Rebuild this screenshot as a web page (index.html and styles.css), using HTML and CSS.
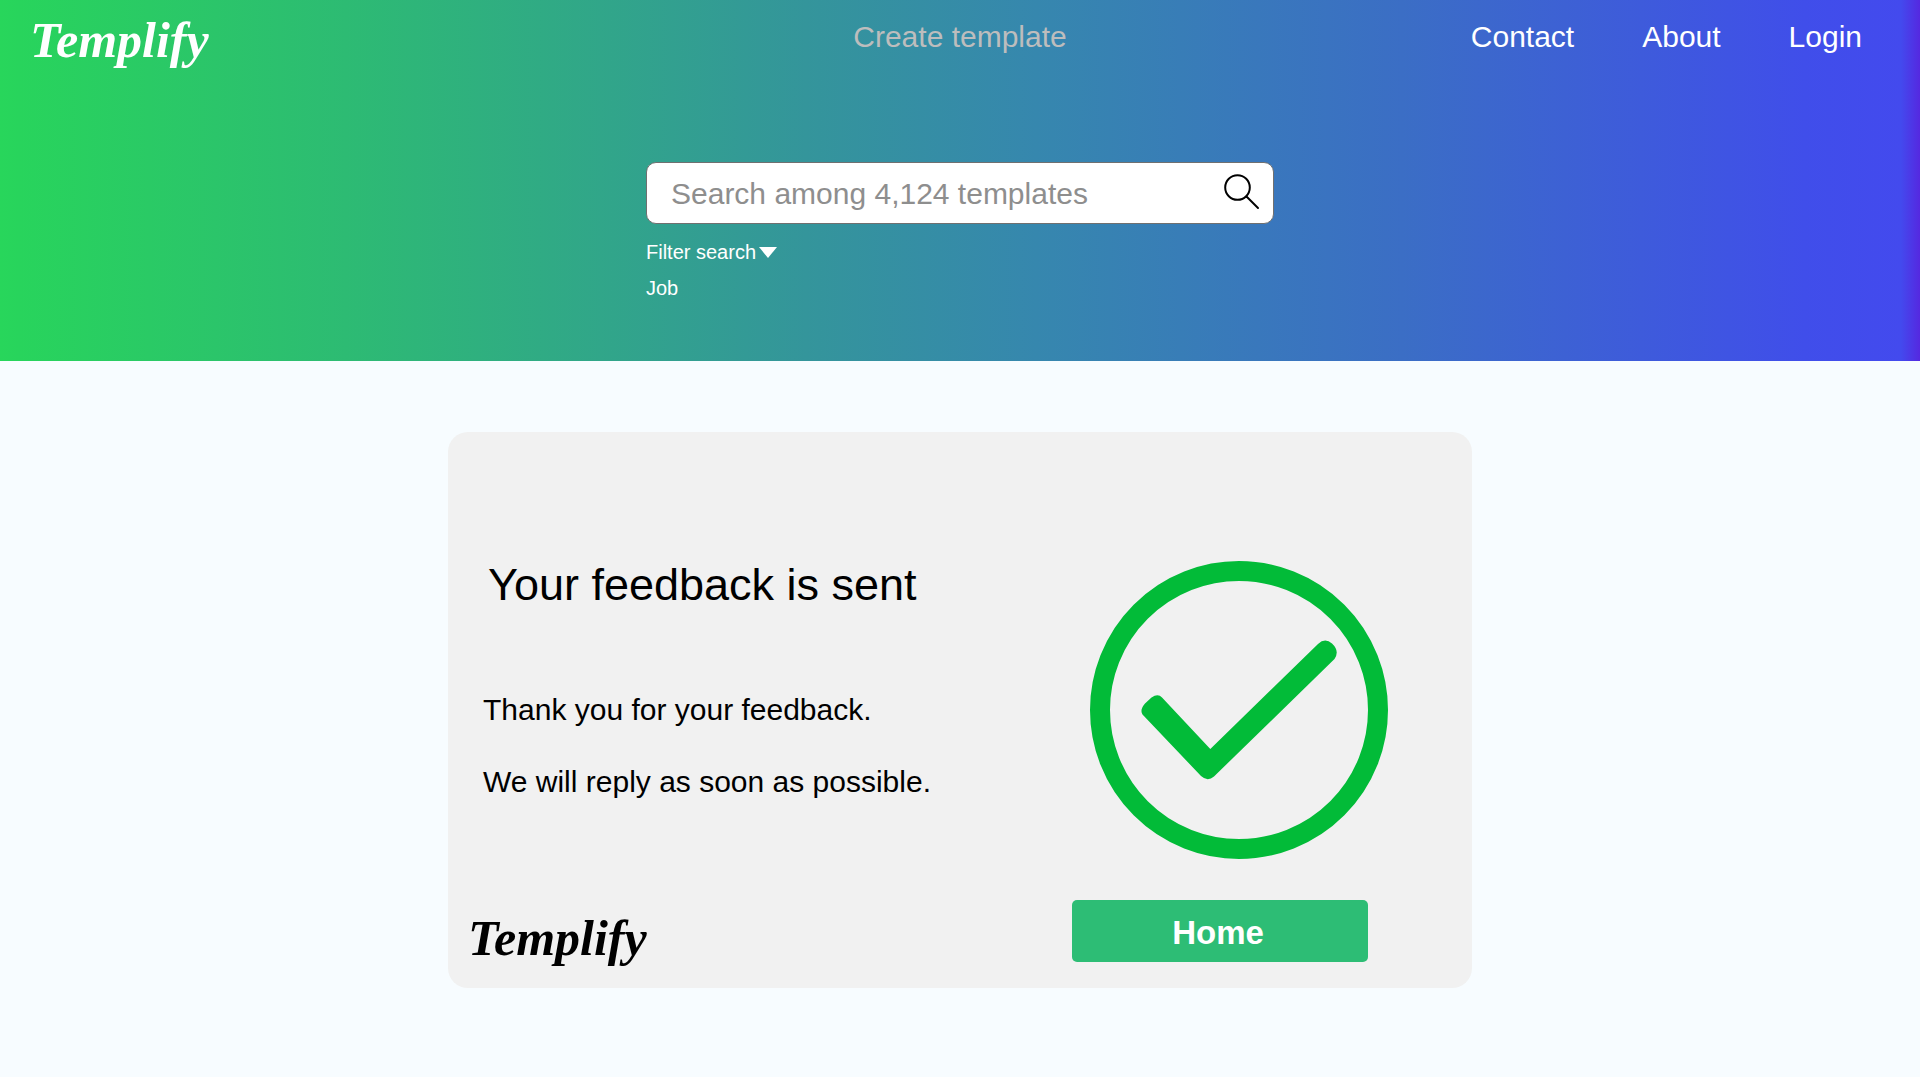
FILE: index.html
```html
<!DOCTYPE html>
<html lang="en">
<head>
  <meta charset="utf-8">
  <meta name="viewport" content="width=device-width, initial-scale=1">
  <title>Templify</title>
  <link rel="stylesheet" href="styles.css">
</head>
<body>
  <header class="hero">
    <nav class="nav">
      <a class="logo" href="#">Templify</a>
      <a class="nav-create" href="#">Create template</a>
      <div class="nav-links">
        <a href="#">Contact</a>
        <a href="#">About</a>
        <a href="#">Login</a>
      </div>
    </nav>
    <form class="search">
      <div class="search-box">
        <input class="search-input" type="text" aria-label="Search templates" placeholder="Search among 4,124 templates">
        <button class="search-button" type="button" aria-label="Search">
          <svg width="36" height="38" viewBox="0 0 36 38" fill="none" stroke="#000" stroke-width="2" stroke-linecap="round"><circle cx="13.5" cy="13.5" r="12.3"/><path d="M22.5 22.5 34 34"/></svg>
        </button>
      </div>
      <button class="filter" type="button">Filter search
        <svg width="18" height="11" viewBox="0 0 18 11" fill="#fff"><path d="M0 0H18L9 11Z"/></svg>
      </button>
      <button class="filter" type="button">Job</button>
    </form>
  </header>
  <main class="content">
    <section class="card">
      <div class="message">
        <h1 class="title">Your feedback is sent</h1>
        <p class="text">Thank you for your feedback.</p>
        <p class="text">We will reply as soon as possible.</p>
        <div class="logo logo-dark">Templify</div>
      </div>
      <div class="action">
        <svg class="check" width="298" height="298" viewBox="0 0 298 298" aria-hidden="true">
          <circle cx="149" cy="149" r="139" fill="none" stroke="#02bb38" stroke-width="20"/>
          <path fill="#02bb38" d="M52.500 153.500Q49.500 149 55 142.500L61.500 136.500Q68 132 72 136.500L120.300 188L228 83Q235 76.500 242 82.500Q250 90 244.500 98L124 215.500Q117.500 221 111 215Z"/>
        </svg>
        <button class="home" type="button">Home</button>
      </div>
    </section>
  </main>
</body>
</html>
```
FILE: styles.css
```css
* {
  box-sizing: border-box;
}

body {
  margin: 0;
  background: #f7fcff;
  color: #000;
  font-family: "Liberation Sans", Arial, sans-serif;
  font-size: 30px;
}

a {
  color: inherit;
  text-decoration: none;
}

button,
input {
  padding: 0;
  border: 0;
  background: none;
  color: inherit;
  font: inherit;
}

.hero {
  padding-bottom: 55px;
  background: linear-gradient(to right, #28d65b 0, #28d45c 1%, #2dbb73 18%, #34959b 42%, #3687ae 54%, #3b6ec5 73%, #404eea 94%, #434aee 99%, #5528e0 100%);
  color: #fff;
}

.nav {
  display: grid;
  grid-template-columns: 1fr auto 1fr;
  height: 76px;
  padding: 0 58px 0 30px;
  line-height: 74px;
}

.logo {
  font-family: "Liberation Serif", "Times New Roman", serif;
  font-size: 50px;
  font-style: italic;
  font-weight: bold;
  line-height: 80px;
}

.nav-create {
  margin-left: 28px;
  color: #bdbdbd;
}

.nav-links {
  display: flex;
  justify-content: flex-end;
  gap: 68px;
}

.search {
  display: flex;
  flex-direction: column;
  align-items: flex-start;
  width: 100%;
  max-width: 628px;
  margin: 86px auto 0;
}

.search-box {
  display: flex;
  align-items: center;
  width: 100%;
  height: 62px;
  margin-bottom: 10px;
  padding: 0 13px 0 24px;
  border: 1px solid #707070;
  border-radius: 10px;
  background: #fff;
  color: #000;
}

.search-input {
  flex: 1;
  min-width: 0;
  height: 60px;
  padding-top: 2px;
  outline: 0;
}

.search-input::placeholder {
  color: #8e8e8e;
  opacity: 1;
}

.search-button {
  display: flex;
}

.filter {
  display: flex;
  align-items: center;
  gap: 3px;
  font-size: 20px;
  line-height: 36px;
}

.content {
  padding: 71px 24px 89px;
}

.card {
  display: grid;
  grid-template-columns: 1fr 400px;
  max-width: 1024px;
  margin: 0 auto;
  padding: 126px 0 26px 20px;
  border-radius: 20px;
  background: #f1f1f1;
}

.message {
  display: flex;
  flex-direction: column;
}

.title {
  margin: 0 0 62px 20px;
  font-size: 45px;
  font-weight: normal;
  line-height: 54px;
}

.text {
  margin: 0 0 0 15px;
  line-height: 72px;
}

.logo-dark {
  margin-top: auto;
  line-height: 48px;
}

.action {
  display: flex;
  flex-direction: column;
  align-items: flex-start;
  gap: 41px;
  padding-top: 3px;
}

.check {
  margin-left: 18px;
}

.home {
  width: 296px;
  height: 62px;
  padding: 3px 4px 0 0;
  border-radius: 5px;
  background: #2dbd75;
  color: #fff;
  font-size: 33px;
  font-weight: bold;
}
```
